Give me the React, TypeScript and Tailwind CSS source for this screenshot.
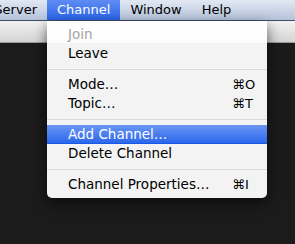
import type { ReactNode } from 'react'

type Entry =
  | { kind: 'item'; label: string; shortcut?: string; disabled?: boolean; active?: boolean }
  | { kind: 'sep' }

const entries: Entry[] = [
  { kind: 'item', label: 'Join', disabled: true },
  { kind: 'item', label: 'Leave' },
  { kind: 'sep' },
  { kind: 'item', label: 'Mode…', shortcut: 'O' },
  { kind: 'item', label: 'Topic…', shortcut: 'T' },
  { kind: 'sep' },
  { kind: 'item', label: 'Add Channel…', active: true },
  { kind: 'item', label: 'Delete Channel' },
  { kind: 'sep' },
  { kind: 'item', label: 'Channel Properties…', shortcut: 'I' },
]

function BarItem({ children, active }: { children: ReactNode; active?: boolean }) {
  return (
    <div
      className={
        active
          ? 'flex h-full items-center bg-gradient-to-b from-[#5f8cf2] to-[#2a64ea] px-[10px] text-white'
          : 'flex h-full items-center px-[10px] text-black'
      }
    >
      {children}
    </div>
  )
}

export default function App() {
  return (
    <div
      className="relative h-[244px] w-[295px] overflow-hidden bg-[#1b1b1b]"
      style={{ fontFamily: '"DejaVu Sans", sans-serif' }}
    >
      <div className="flex h-[21px] border-b border-[#3f4d68] bg-gradient-to-b from-[#e3e9f3] to-[#b4c2da] text-[13px]">
        <div className="flex h-full w-[47px] shrink-0 items-center justify-end pr-[10px] text-black">
          Server
        </div>
        <BarItem active>Channel</BarItem>
        <BarItem>Window</BarItem>
        <BarItem>Help</BarItem>
      </div>

      <div className="h-[22px] border-b border-[#9a9a9a] bg-gradient-to-b from-[#f2f2f2] to-[#d4d4d4]" />

      <div className="absolute left-[47px] top-[21px] w-[220px] rounded-b-[5px] bg-white/95 py-[4px] text-[13.5px] shadow-[0_5px_14px_rgba(0,0,0,0.6)]">
        {entries.map((entry, i) =>
          entry.kind === 'sep' ? (
            <div key={i} className="flex h-[12px] items-center">
              <div className="h-px w-full bg-[#dadada]" />
            </div>
          ) : (
            <div
              key={i}
              className={
                entry.active
                  ? 'flex h-[19px] items-center justify-between border-b border-[#1858e4] bg-gradient-to-b from-[#6a95f3] to-[#2b67ec] pl-[21px] text-white'
                  : entry.disabled
                    ? 'flex h-[19px] items-center justify-between pl-[21px] text-[#a3a3a3]'
                    : 'flex h-[19px] items-center justify-between pl-[21px] text-black'
              }
            >
              <span>{entry.label}</span>
              {entry.shortcut ? (
                <span className="w-[35px] text-[13px]">⌘{entry.shortcut}</span>
              ) : null}
            </div>
          ),
        )}
      </div>
    </div>
  )
}
